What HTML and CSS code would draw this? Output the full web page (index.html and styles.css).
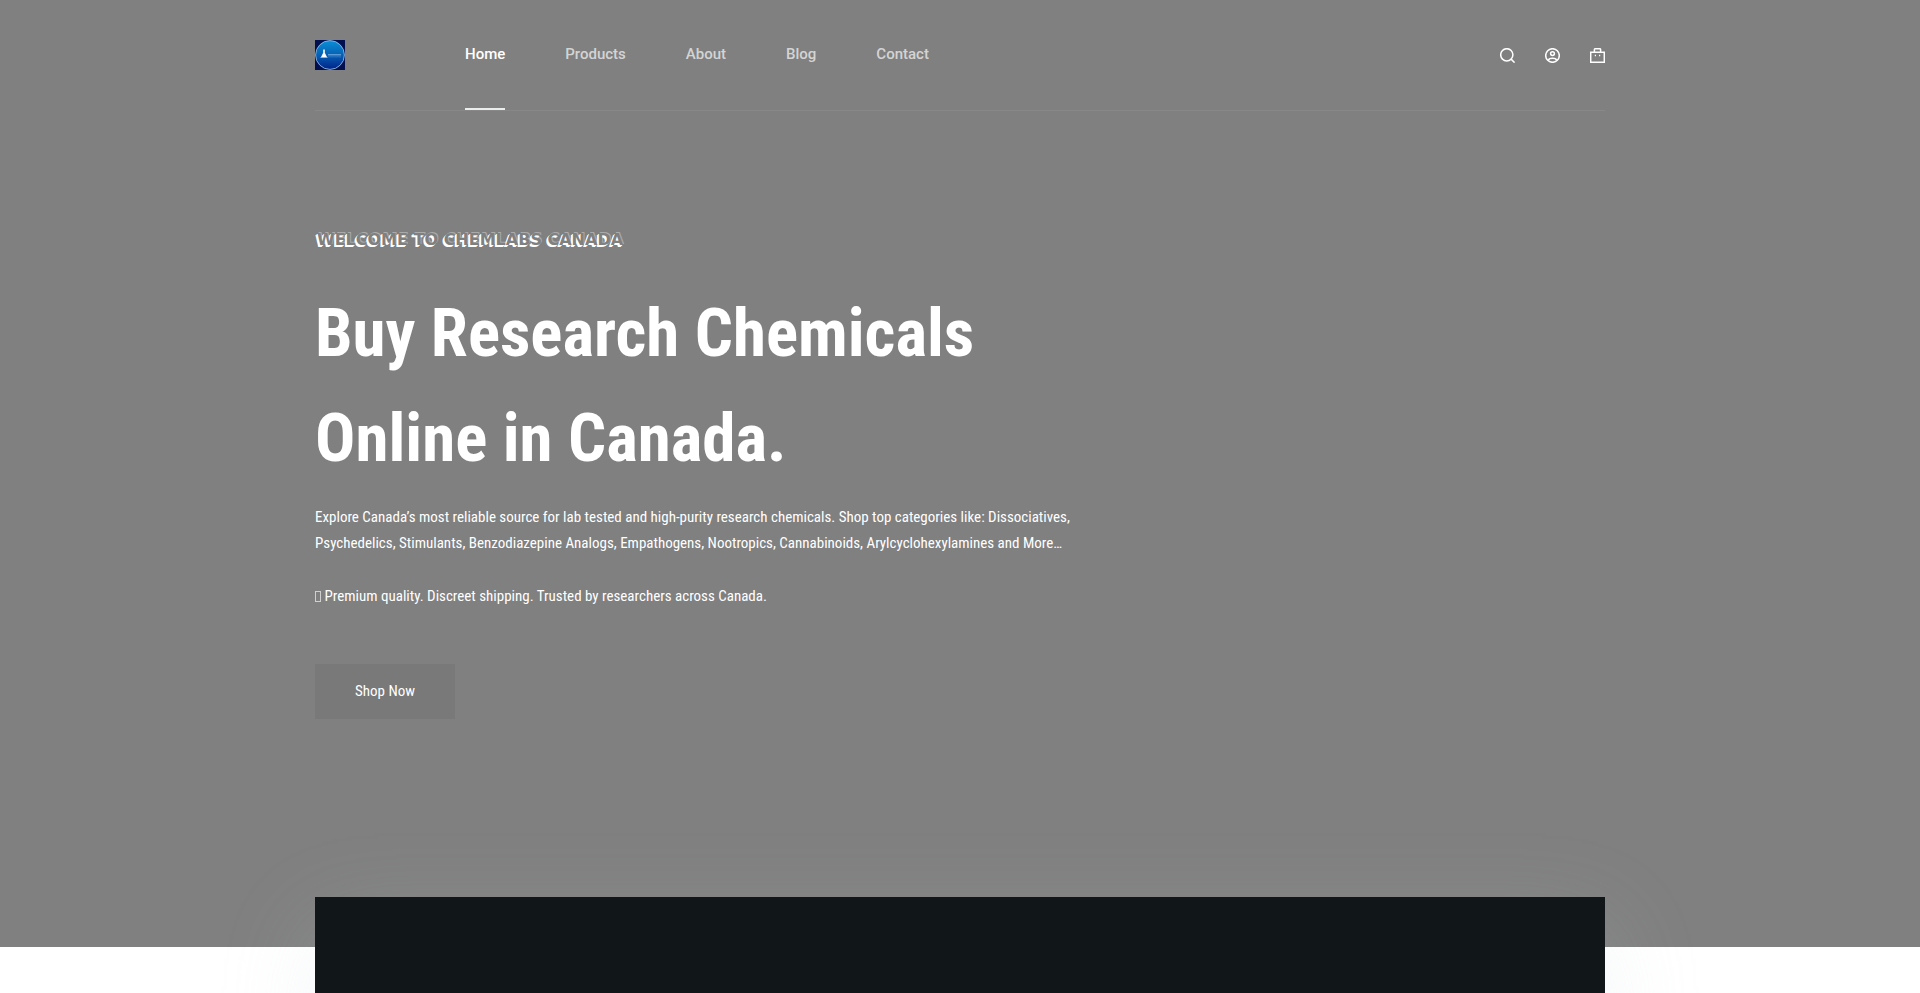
FILE: index.html
```html
<!DOCTYPE html>
<html lang="en">
<head>
  <meta charset="UTF-8">
  <meta name="viewport" content="width=device-width, initial-scale=1">
  <title>Chemlabs Canada</title>
  <link rel="stylesheet" href="styles.css">
</head>
<body>
  <div class="hero">
    <header class="header container">
      <a href="#" class="logo" aria-label="Chemlabs Canada">
        <svg width="30" height="30" viewBox="0 0 30 30">
          <defs>
            <linearGradient id="disc" x1="0" y1="0" x2="0" y2="1">
              <stop offset="0" stop-color="#0b8fd6"/>
              <stop offset="0.5" stop-color="#0660b4"/>
              <stop offset="1" stop-color="#02228a"/>
            </linearGradient>
          </defs>
          <rect width="30" height="30" fill="#03104f"/>
          <circle cx="15" cy="15" r="14.4" fill="url(#disc)" stroke="#8fb9e4" stroke-width="0.9"/>
          <path d="M8.2 9.5h1.6v3.2l2.2 4.3H6l2.2-4.3z" fill="#fff"/>
          <path d="M5.5 17.5h7" stroke="#a9cdf0" stroke-width="0.8"/>
          <path d="M13 14.8h13" stroke="#6fa8de" stroke-width="1.2"/>
          <path d="M13 16.8h13" stroke="#3f83cb" stroke-width="0.7"/>
        </svg>
      </a>
      <nav class="menu">
        <a href="#" class="active">Home</a>
        <a href="#">Products</a>
        <a href="#">About</a>
        <a href="#">Blog</a>
        <a href="#">Contact</a>
      </nav>
      <div class="actions">
        <button type="button" aria-label="Search">
          <svg width="15" height="15" viewBox="0 0 15 15" fill="none" stroke="#fff" stroke-width="1.5">
            <circle cx="6.8" cy="6.8" r="6.1"/>
            <path d="M11.1 11.1l3.5 3.5"/>
          </svg>
        </button>
        <a href="#" aria-label="Account">
          <svg width="15" height="15" viewBox="0 0 15 15" fill="none" stroke="#fff" stroke-width="1.5">
            <circle cx="7.5" cy="7.5" r="6.8"/>
            <circle cx="7.5" cy="5.6" r="1.9"/>
            <path d="M3.6 12.2c0-1.2 1.8-1.9 3.9-1.9s3.9.7 3.9 1.9"/>
          </svg>
        </a>
        <a href="#" aria-label="Shopping cart">
          <svg width="15" height="15" viewBox="0 0 15 15" fill="none" stroke="#fff" stroke-width="1.5">
            <path d="M.7 4.2h13.6v10.1H.7z"/>
            <path d="M4.4 4V1.6c0-.5.3-.9.9-.9h4.4c.6 0 .9.4.9.9V4"/>
            <path d="M4.8 7.4h1.2M9 7.4h1.2"/>
          </svg>
        </a>
      </div>
    </header>

    <section class="intro container">
      <p class="eyebrow">WELCOME TO CHEMLABS CANADA</p>
      <h1>Buy Research Chemicals<br>Online in Canada.</h1>
      <p class="text">Explore Canada’s most reliable source for lab tested and high-purity research chemicals. Shop top categories like: Dissociatives,<br>Psychedelics, Stimulants, Benzodiazepine Analogs, Empathogens, Nootropics, Cannabinoids, Arylcyclohexylamines and More…</p>
      <p class="text"><span class="mark"></span> Premium quality. Discreet shipping. Trusted by researchers across Canada.</p>
      <a href="#" class="btn">Shop Now</a>
    </section>
  </div>

  <section class="panel container"></section>
</body>
</html>
```
FILE: styles.css
```css
* { box-sizing: border-box; }
body { margin: 0; background: #fff; color: #fff; font-family: "Roboto Condensed", "Liberation Sans", sans-serif; }
a { color: inherit; text-decoration: none; }
.container { width: 88%; max-width: 1290px; margin: 0 auto; }

.hero { background: #808080; padding-bottom: 228px; }

/* header */
.header { display: flex; height: 111px; border-bottom: 1px solid #888; }
.logo { display: flex; align-items: center; margin-right: 120px; }
.menu { display: flex; gap: 60px; font: 500 15px/108px Roboto, sans-serif; color: #d4d4d4; }
.menu a { height: 110px; border-bottom: 2px solid transparent; }
.menu .active { color: #fff; border-color: #e9eeec; }
.actions { display: flex; align-items: center; gap: 30px; margin-left: auto; }
.actions a, .actions button { display: flex; padding: 0; border: 0; background: none; color: inherit; cursor: pointer; }

/* intro */
.intro { padding-top: 116px; }
.eyebrow { margin: 0 0 28px; padding-left: 2px; font: bold 16px/26px "DejaVu Sans", sans-serif; color: #808080; text-shadow: -1px 1px 0 #fff, -2px 2px 0 #fff, 1px -1px 0 #aaa; }
h1 { margin: 0 0 13px; font-size: 67px; line-height: 105px; font-weight: bold; }
.text { margin: 0 0 27px; font-size: 15px; line-height: 26px; }
.mark { display: inline-block; width: 6px; height: 11px; border: 1px solid #d0d0d0; vertical-align: -1px; }
.btn { display: inline-block; margin-top: 28px; padding: 0 40px; background: #797979; font-size: 15px; line-height: 55px; }

/* panel overlapping the hero */
.panel { height: 500px; margin-top: -50px; background: #111618; box-shadow: 0 30px 90px rgba(200, 208, 222, 0.2); }
```
